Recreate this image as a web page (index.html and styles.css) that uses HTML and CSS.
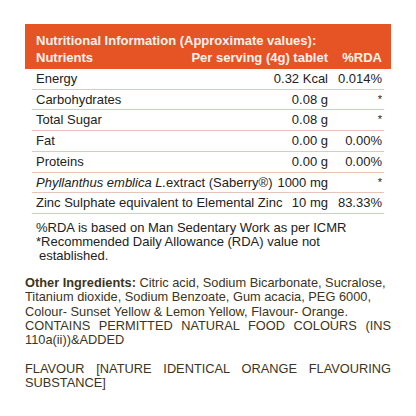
FILE: index.html
```html
<!DOCTYPE html>
<html lang="en">
<head>
  <meta charset="UTF-8">
  <meta name="viewport" content="width=device-width, initial-scale=1.0">
  <title>Nutritional Information</title>
  <link rel="stylesheet" href="styles.css">
</head>
<body>
  <div class="label">
    <div class="facts">
      <div class="facts-head">
        <div class="facts-title">Nutritional Information (Approximate values):</div>
        <div class="row head-row">
          <span>Nutrients</span>
          <span class="num">Per serving (4g) tablet</span>
          <span class="num">%RDA</span>
        </div>
      </div>
      <div class="rows">
        <div class="row"><span>Energy</span><span class="num">0.32 Kcal</span><span class="num">0.014%</span></div>
        <div class="row"><span>Carbohydrates</span><span class="num">0.08 g</span><span class="num star">*</span></div>
        <div class="row"><span>Total Sugar</span><span class="num">0.08 g</span><span class="num star">*</span></div>
        <div class="row"><span>Fat</span><span class="num">0.00 g</span><span class="num">0.00%</span></div>
        <div class="row"><span>Proteins</span><span class="num">0.00 g</span><span class="num">0.00%</span></div>
        <div class="row"><span><em>Phyllanthus emblica L.</em>extract (Saberry®)</span><span class="num">1000 mg</span><span class="num star">*</span></div>
        <div class="row"><span>Zinc Sulphate equivalent to Elemental Zinc</span><span class="num">10 mg</span><span class="num">83.33%</span></div>
      </div>
      <p class="notes">
        %RDA is based on Man Sedentary Work as per ICMR<br>
        *Recommended Daily Allowance (RDA) value not<br>
        <span class="indent">established.</span>
      </p>
    </div>

    <div class="ingredients">
      <p><strong>Other Ingredients:</strong> Citric acid, Sodium Bicarbonate, Sucralose,<br>
      Titanium dioxide, Sodium Benzoate, Gum acacia, PEG 6000,<br>
      Colour- Sunset Yellow &amp; Lemon Yellow, Flavour- Orange.<br>
      CONTAINS PERMITTED NATURAL FOOD COLOURS (INS 110a(ii))&amp;ADDED</p>
      <p>FLAVOUR [NATURE IDENTICAL ORANGE FLAVOURING SUBSTANCE]</p>
    </div>
  </div>
</body>
</html>
```

FILE: styles.css
```css
* {
  margin: 0;
  padding: 0;
  box-sizing: border-box;
}

body {
  background: #ffffff;
  font-family: 'Liberation Sans', Arial, sans-serif;
  font-size: 13px;
  color: #222;
}

.label {
  width: 366px;
  margin: 24px 0 0 25px;
}

/* Tabela */
.facts-head {
  background: #e65425;
  color: #fdf3ee;
  font-weight: bold;
  padding: 8px 9px 3px 11px;
}

.facts-title {
  line-height: 17px;
}

.row {
  display: grid;
  grid-template-columns: 1fr auto 54px;
  line-height: 19.7px;
}

.head-row {
  line-height: 17px;
}

.num {
  text-align: right;
  white-space: nowrap;
}

.star {
  font-size: 11px;
}

.rows {
  padding: 0 7px;
}

.rows .row {
  padding: 0 2px 0 4px;
  border-bottom: 1px solid #e6c6b8;
}

.notes {
  padding: 7px 0 0 11px;
  line-height: 14px;
}

.notes .indent {
  padding-left: 3px;
}

/* Ingredientes */
.ingredients {
  margin-top: 13px;
  font-size: 12.8px;
  color: #3b3522;
  line-height: 14.3px;
  text-align: justify;
}

.ingredients p + p {
  margin-top: 14.3px;
}
```
